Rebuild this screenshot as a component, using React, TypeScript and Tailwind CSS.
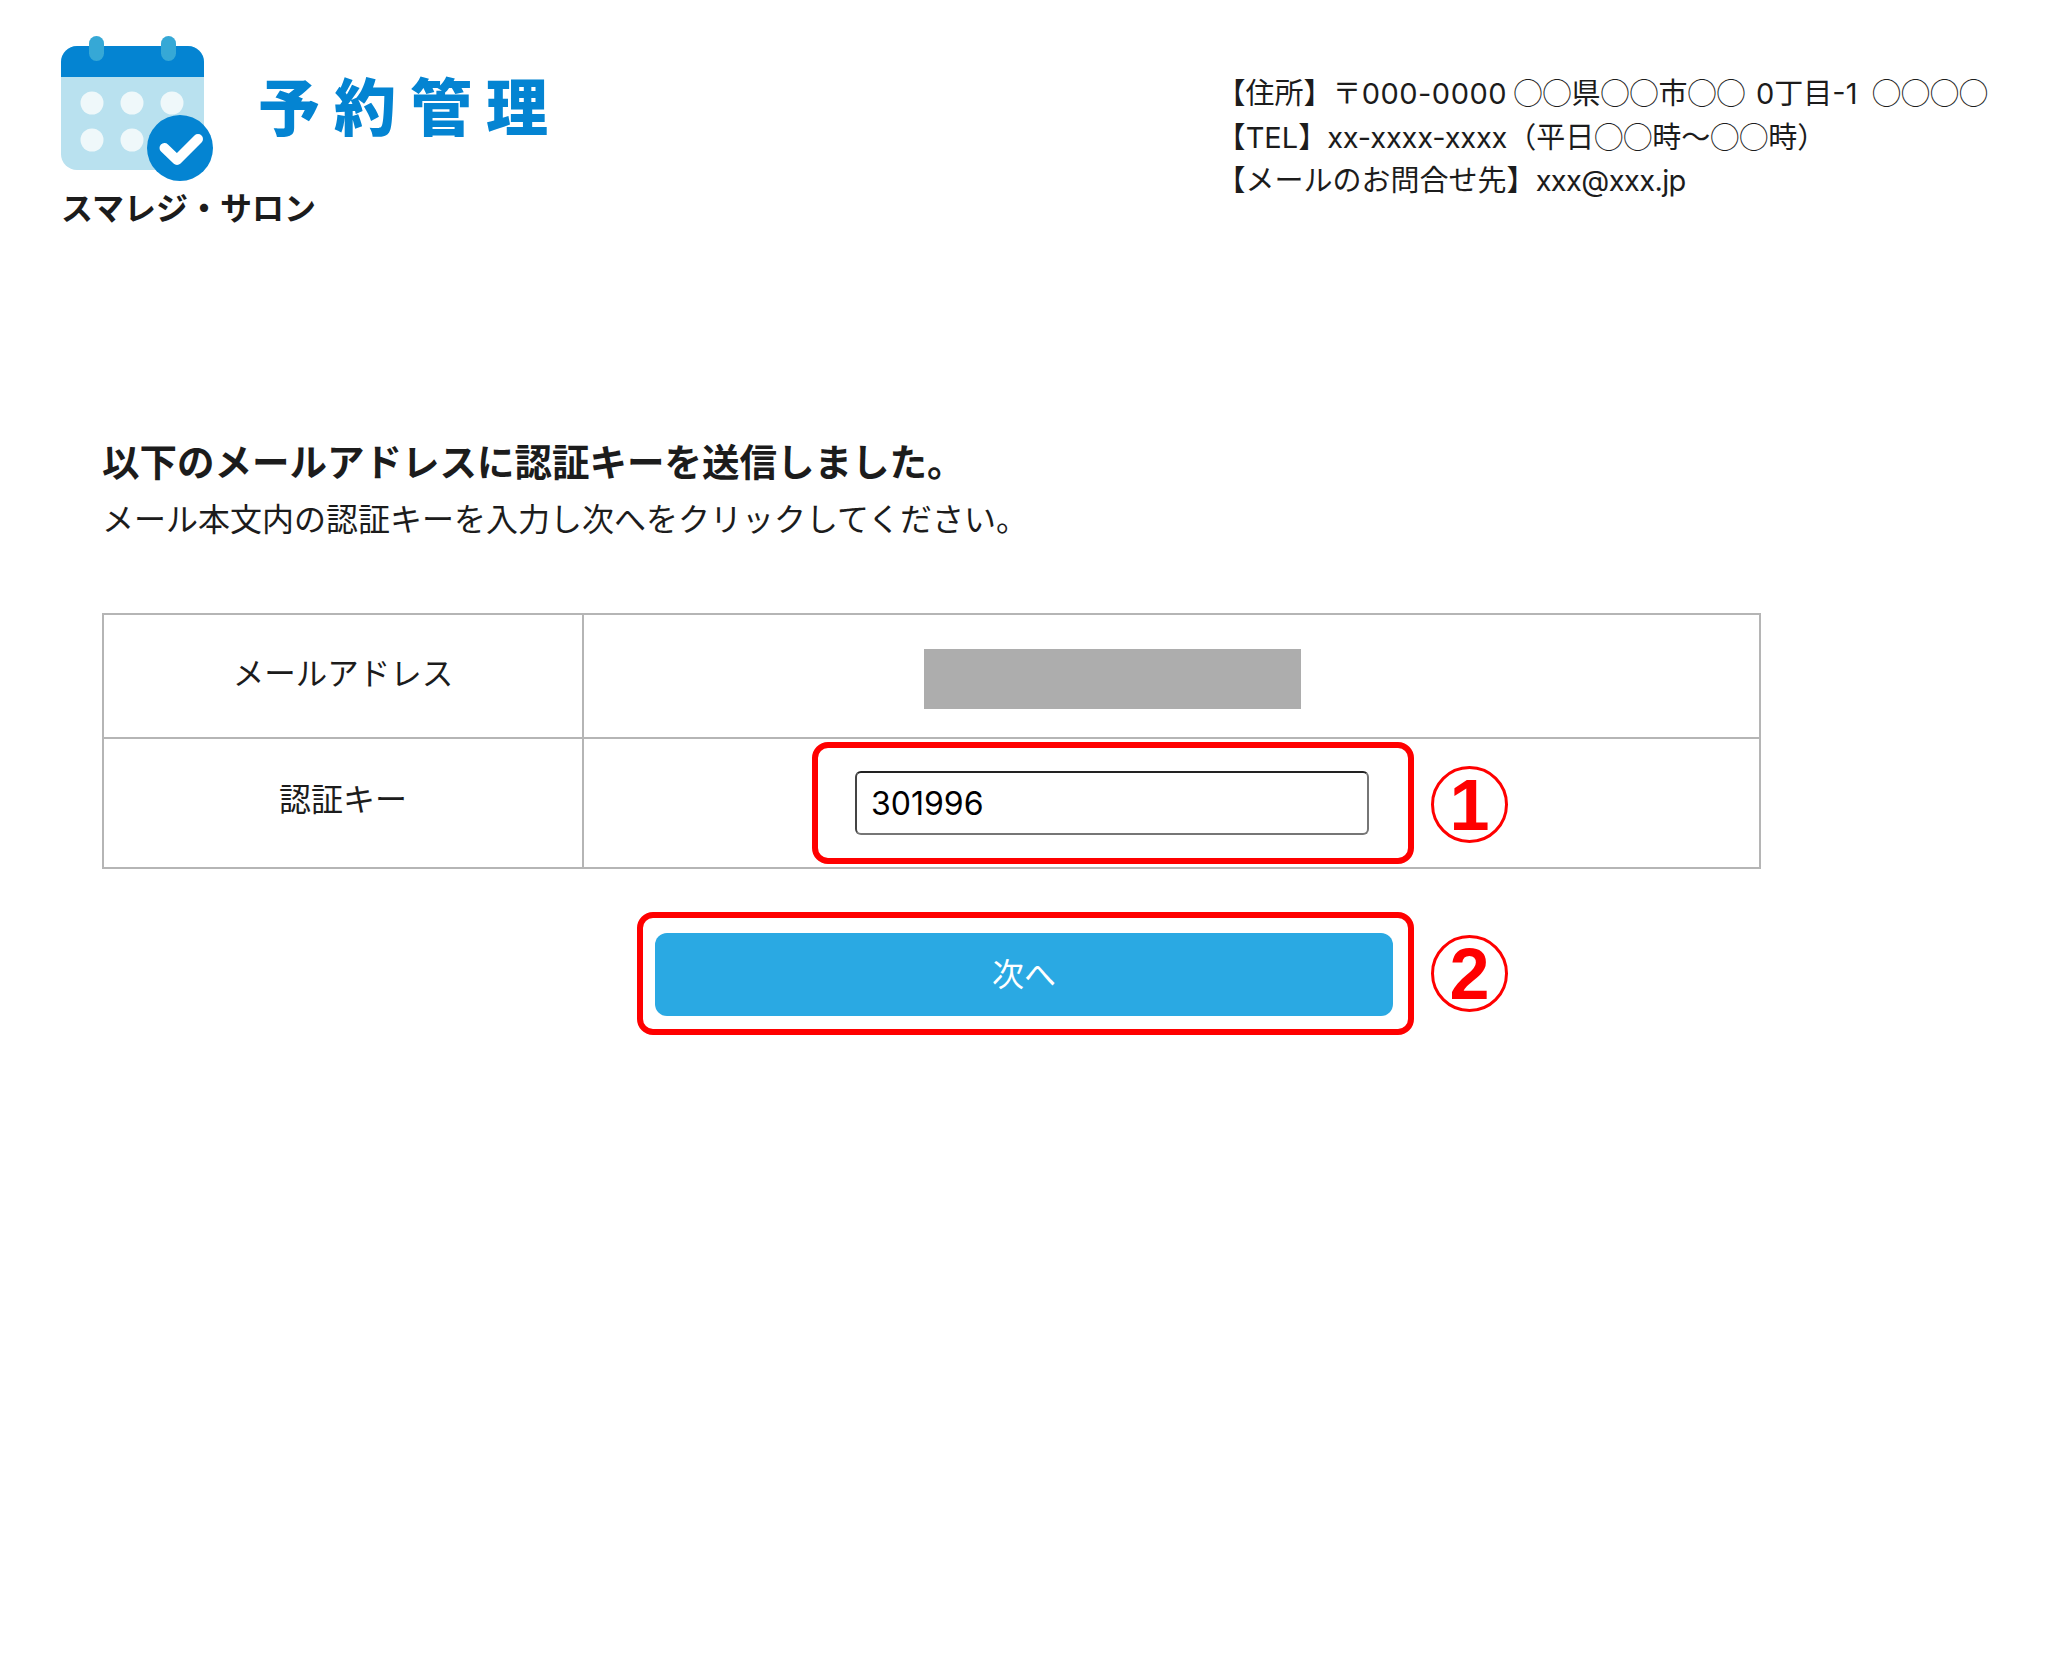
const font = { fontFamily: '"Noto Sans CJK JP", "Noto Sans", sans-serif' };
const latinFont = { fontFamily: 'Inter, "Noto Sans CJK JP", sans-serif' };

function CalendarLogo() {
	return (
		<svg width="152" height="149" viewBox="0 0 152 149" className="shrink-0">
			<path d="M0 26a16 16 0 0 1 16-16h111a16 16 0 0 1 16 16v92a16 16 0 0 1-16 16H16a16 16 0 0 1-16-16z" fill="#b9e1ef" />
			<path d="M0 41V26a16 16 0 0 1 16-16h111a16 16 0 0 1 16 16v15z" fill="#0484d2" />
			<rect x="28" y="0" width="15" height="25" rx="7.5" fill="#36a8d6" />
			<rect x="100" y="0" width="15" height="25" rx="7.5" fill="#36a8d6" />
			{[31, 71, 111].map((cx) => (
				<ellipse key={cx} cx={cx} cy="67" rx="11.5" ry="11.5" fill="#eff8fa" />
			))}
			{[31, 71].map((cx) => (
				<ellipse key={cx} cx={cx} cy="104" rx="11.5" ry="11.5" fill="#eff8fa" />
			))}
			<circle cx="119" cy="112" r="33" fill="#0484d2" />
			<path d="M103.5 112l12.5 12 21-21" fill="none" stroke="#fff" strokeWidth="10" strokeLinecap="round" strokeLinejoin="round" />
		</svg>
	);
}

function Marker({ n }: { n: string }) {
	return (
		<span className="flex size-[77px] items-center justify-center rounded-[50%] border-[3px] border-[#ff0000] font-['Liberation_Sans'] text-[72px] leading-none font-bold text-[#ff0000]">{n}</span>
	);
}

// the digits and x's in the address run wider than the CJK font's own latin
function Latin({ children, className }: { children: string; className?: string }) {
	return <span style={latinFont} className={className}>{children}</span>;
}

export default function App() {
	return (
		<div className="min-h-[1670px] bg-white text-[#1c1c1c]" style={font}>
			<header className="flex justify-between pt-[36px] pr-[60px] pl-[61px]">
				<div>
					<div className="flex items-center gap-[45px]">
						<CalendarLogo />
						<span className="mb-[14px] text-[62px] leading-none font-black tracking-[14px] whitespace-nowrap text-[#0484d2]">予約管理</span>
					</div>
					<p className="-mt-[1px] text-[32px] leading-[44px] font-bold whitespace-nowrap">スマレジ・サロン</p>
				</div>
				<div className="mt-[34px] text-[29px] leading-[43.5px] whitespace-nowrap">
					<p className="h-[43.5px]">【住所】〒<Latin className="tracking-[0.5px]">000-0000</Latin> ◯◯県◯◯市◯◯ <Latin className="ml-[4px]">0</Latin>丁目<Latin>-1</Latin> <span className="ml-[8px]">◯◯◯◯</span></p>
					<p className="h-[43.5px]">【<Latin>TEL</Latin>】<Latin className="tracking-[-0.2px]">xx-xxxx-xxxx</Latin>（平日◯◯時〜◯◯時）</p>
					<p className="h-[43.5px]">【メールのお問合せ先】<Latin className="tracking-[-0.6px]">xxx@xxx.jp</Latin></p>
				</div>
			</header>

			<main className="pt-[204px] pl-[102px]">
				<h1 className="text-[37.5px] leading-[56px] font-bold whitespace-nowrap">以下のメールアドレスに認証キーを送信しました。</h1>
				<p className="pt-[1px] text-[32px] leading-[56px] whitespace-nowrap">メール本文内の認証キーを入力し次へをクリックしてください。</p>

				<div className="mt-[68px] w-[1659px] border-2 border-[#b5b5b5]">
					<div className="flex h-[124px] border-b-2 border-[#b5b5b5]">
						<div className="flex w-[480px] items-center justify-center border-r-2 border-[#b5b5b5] pb-[8px] text-[31.5px]">メールアドレス</div>
						<div className="flex flex-1 items-center justify-center pt-[6px] pr-[119px]">
							<div className="h-[60px] w-[377px] bg-[#adadad]" />
						</div>
					</div>
					<div className="flex h-[128px]">
						<div className="flex w-[480px] items-center justify-center border-r-2 border-[#b5b5b5] pb-[13px] text-[32px]">認証キー</div>
						<div className="flex flex-1 items-center justify-center pr-[119px]">
							<div className="relative">
								<input readOnly value="301996" style={latinFont} className="block h-[64px] w-[514px] rounded-[6px] border-2 border-t-[#222222] border-r-[#767676] border-b-[#767676] border-l-[#444444] px-[14px] text-[32px] text-black" />
								<div className="absolute -top-[29px] -right-[45px] -bottom-[29px] -left-[43px] rounded-[16px] border-[6px] border-[#ff0000]" />
								<div className="absolute top-[-5px] -right-[139px]"><Marker n="1" /></div>
							</div>
						</div>
					</div>
				</div>

				<div className="mt-[64px] ml-[553px] flex">
					<div className="relative">
						<button className="block h-[83px] w-[738px] rounded-[12px] bg-[#2aa9e3] pb-[5px] text-[32px] text-white">次へ</button>
						<div className="absolute -top-[21px] -right-[21px] -bottom-[19px] -left-[18px] rounded-[16px] border-[6px] border-[#ff0000]" />
						<div className="absolute top-[2px] -right-[115px]"><Marker n="2" /></div>
					</div>
				</div>
			</main>
		</div>
	);
}
